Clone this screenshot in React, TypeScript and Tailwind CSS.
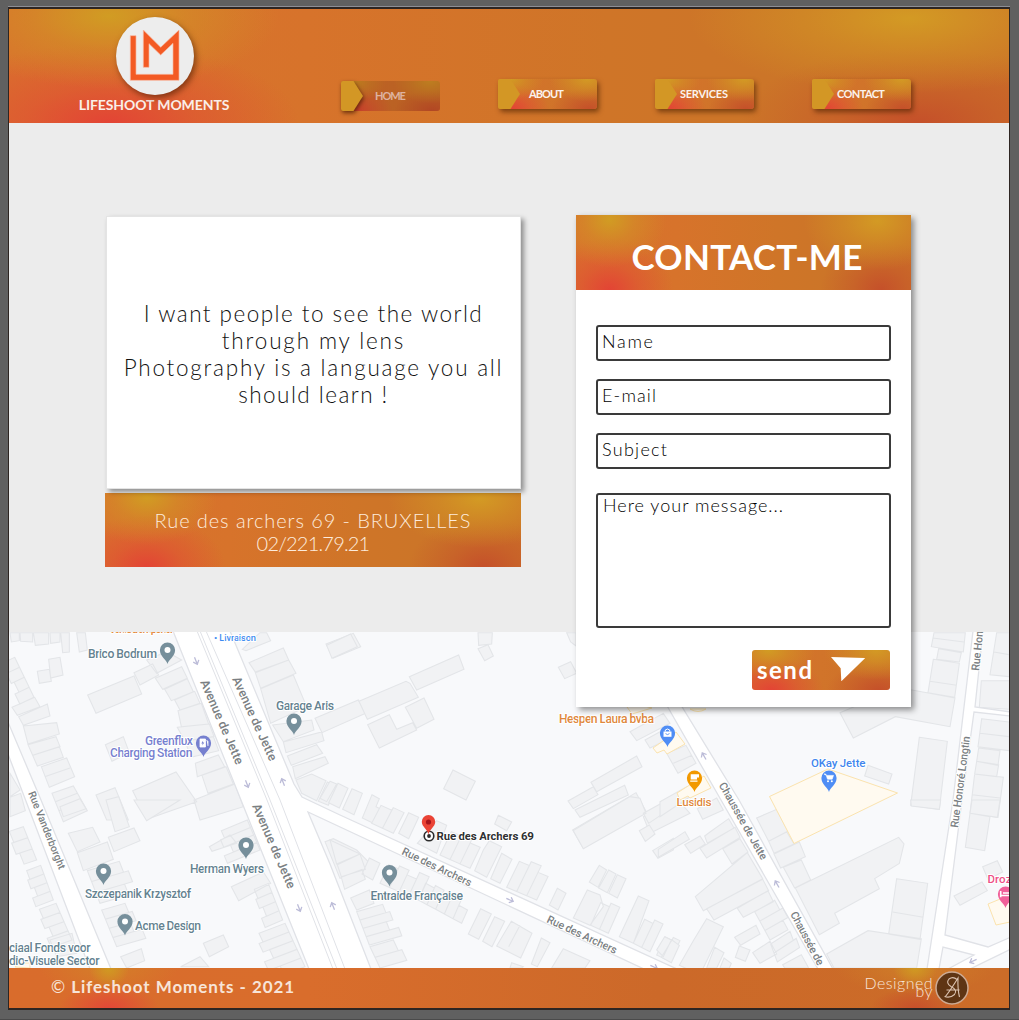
import type { ReactNode } from "react";

const EMBER =
  "bg-[radial-gradient(ellipse_17%_64%_at_10%_6%,#d19c23_0%,rgba(209,150,37,0.5)_45%,rgba(209,140,35,0)_100%),radial-gradient(ellipse_22%_66%_at_90%_8%,#d39a24_0%,rgba(211,150,36,0.55)_45%,rgba(211,140,36,0)_100%),radial-gradient(ellipse_19%_70%_at_10%_100%,#e34435_0%,rgba(225,76,52,0.55)_45%,rgba(222,90,50,0)_100%),radial-gradient(ellipse_18%_66%_at_91%_100%,#c5502a_0%,rgba(197,82,42,0.5)_45%,rgba(200,95,42,0)_100%),linear-gradient(90deg,#d9712d_0%,#d7732b_30%,#cf7528_60%,#cb7528_80%,#cb7028_100%)]";

const BUTTON_FILL =
  "bg-[radial-gradient(ellipse_34%_70%_at_12%_0%,#d19c23_0%,rgba(209,150,35,0.5)_50%,rgba(209,140,35,0)_100%),radial-gradient(ellipse_38%_75%_at_90%_0%,#d39a24_0%,rgba(211,150,36,0.5)_50%,rgba(211,140,36,0)_100%),radial-gradient(ellipse_38%_80%_at_14%_100%,#e34435_0%,rgba(225,76,52,0.5)_50%,rgba(222,90,50,0)_100%),radial-gradient(ellipse_38%_70%_at_92%_100%,#c5502a_0%,rgba(197,82,42,0.5)_50%,rgba(200,95,42,0)_100%),linear-gradient(90deg,#d76e2c_0%,#d1742a_50%,#cc7028_100%)]";

const FOOTER_FILL =
  "bg-[radial-gradient(ellipse_20px_20px_at_100px_0px,#d09a22_0%,rgba(208,154,34,0)_100%),radial-gradient(ellipse_70px_26px_at_100px_0px,rgba(211,130,40,0.8)_0%,rgba(211,130,40,0)_100%),radial-gradient(ellipse_50px_24px_at_100px_40px,#e34837_0%,rgba(227,72,55,0)_100%),radial-gradient(ellipse_22px_18px_at_906px_0px,#d09a22_0%,rgba(208,154,34,0)_100%),radial-gradient(ellipse_80px_26px_at_906px_0px,rgba(207,130,40,0.8)_0%,rgba(207,130,40,0)_100%),radial-gradient(ellipse_45px_20px_at_906px_40px,#c9502b_0%,rgba(201,80,43,0)_100%),linear-gradient(90deg,#d96c2c_0%,#d96d2c_30%,#cc6929_65%,#cb6c28_100%)]";

function Logo() {
  return (
    <svg viewBox="348 51 234 234" className="size-[78px] overflow-visible drop-shadow-[2px_3px_3px_rgba(70,25,0,0.6)]">
      <circle cx="465" cy="168" r="117" fill="#ededed" />
      <path
        d="M391 107H408V223H519V130L482 165L447 131V202H430V90L482 142L537 90V241H391Z"
        fill="#f35a24"
        stroke="#f9b79f"
        strokeWidth="2"
      />
    </svg>
  );
}

function NavButton({ label, className, active = false }: { label: string; className: string; active?: boolean }) {
  return (
    <a
      href="#"
      className={
        active
          ? "relative mt-[2px] block h-[30px] w-[99px]"
          : "relative block h-[30px] w-[99px] rounded-[3px] shadow-[2px_3px_5px_rgba(70,30,0,0.6)]"
      }
    >
      <span className={`absolute inset-0 rounded-[3px] ${BUTTON_FILL}`} />
      {active && <span className="absolute inset-0 rounded-[3px] bg-[#7a2a14]/25" />}
      <svg
        viewBox="0 0 22 30"
        className={
          active
            ? "absolute left-0 top-0 h-[30px] w-[22px] overflow-visible drop-shadow-[1px_2px_2px_rgba(60,20,0,0.7)]"
            : "absolute left-0 top-0 h-[30px] w-[22px]"
        }
      >
        <path d="M2 0H12.5L22 15L12.5 30H2Q0 30 0 28V2Q0 0 2 0Z" fill="#d39725" />
      </svg>
      <span className={`absolute top-[7px] whitespace-nowrap text-[11px] leading-[16px] font-bold ${className}`}>{label}</span>
    </a>
  );
}

/* Terrace of n houses along a street front; (dx, dy) points to the back yards. */
function row(x1: number, y1: number, x2: number, y2: number, n: number, dx: number, dy: number) {
  const depth = [1, 1.15, 0.9, 1.25, 0.8, 1.05];
  let d = "";
  for (let i = 0; i < n; i++) {
    const k = depth[i % depth.length];
    const ax = x1 + ((x2 - x1) * i) / n;
    const ay = y1 + ((y2 - y1) * i) / n;
    const bx = x1 + ((x2 - x1) * (i + 1)) / n;
    const by = y1 + ((y2 - y1) * (i + 1)) / n;
    d += `M${ax} ${ay}L${bx} ${by}l${dx * k} ${dy * k}L${ax + dx * k} ${ay + dy * k}Z`;
  }
  return d;
}

const BLOCKS: { x: number; y: number; d: string[] }[] = [
  {
    x: 0,
    y: 620,
    d: [
      "M30 38H58V62L34 66Z", "M60 38H98V66L62 64Z", "M100 38H146V72L106 76Z", "M150 38H180V66L152 70Z",
      "M182 38H208V96L188 98Z", "M230 38H256L262 90L238 96Z",
      "M146 118L180 112L189 165L152 174Z", "M112 154L148 148L154 184L118 190Z",
      "M263 225L402 168L425 222L288 280Z", "M402 158L458 132L476 165L420 195Z",
      "M316 374L370 350L388 398L336 424Z", "M398 512L528 456L590 545L440 598Z", "M288 525L345 503L385 600H320Z",
      row(44, 112, 102, 232, 4, -34, 16),
      "M36 262L104 232L120 260L52 286Z",
      "M56 290L142 252L150 288L70 316Z", "M70 318L170 308L178 342L84 372Z", "M84 374L168 350L180 380L98 406Z",
      "M98 406L178 380L190 412L112 438Z", "M124 440L200 414L224 470L148 502Z", "M134 470L210 444", "M156 520L220 498L262 572L190 605Z",
      "M166 545L232 520M176 572L246 546",
      "M30 460L60 510L30 530Z", "M30 532L62 520L76 572L30 590Z",
      "M440 120L500 95L545 120L470 160Z", "M466 175L545 140L562 175L488 208Z", "M494 208L562 176L580 215L514 242Z",
      "M524 240L584 214L600 250L540 270Z", "M534 272L604 250L626 312L544 320Z", "M532 322L628 312L642 350L554 362Z",
      "M556 364L640 350L656 392L572 412Z", "M586 430L655 405L674 440L592 470Z", "M606 466L678 440L700 492L624 520Z",
      "M582 540L705 492L730 560L600 600Z",
      "M727 88L780 38L800 38L812 62L738 92Z", "M747 128L850 84L866 120L766 156Z", "M766 158L866 120L888 160L782 205Z",
      "M782 206L880 165L920 260L812 310Z", "M818 315L935 300L942 330L850 365Z", "M850 366L965 336L972 362L858 398Z",
      "M862 408L950 374L968 400L874 436Z", "M878 440L975 410L985 430L886 476Z", "M888 480L935 462L978 482L950 542L905 520Z",
      "M982 486L1010 498L985 556L955 544Z",
      "M945 295L1075 240L1097 280L966 338Z", "M978 72L1060 40L1082 80L1000 114Z",
    ],
  },
  {
    x: 0,
    y: 800,
    d: [
      "M180 20L240 -4L258 26L190 50Z", "M205 100L278 82L300 126L232 155Z", "M325 112L402 84L420 122L342 155Z",
      "M232 158L322 126L340 178L250 212Z", "M402 0H540L440 62Z", "M318 0L356 -10L388 80L345 95Z",
      row(262, 212, 300, 310, 3, 96, -28), row(305, 330, 350, 440, 4, 70, -20), "M362 470L424 446L434 482L380 504Z",
      row(70, 80, 110, 180, 3, -42, 14), row(122, 196, 160, 300, 4, -42, 16), row(168, 310, 216, 420, 4, -50, 18), "M150 420L216 400L230 460L170 470Z",
      "M628 140L690 105L710 130L636 154Z", "M610 430L670 405L686 440L628 470Z", "M542 500L600 470L626 500Z",
      "M694 260L790 216L812 250L716 302Z", row(742, 60, 780, 150, 4, -78, 32), row(805, 250, 848, 360, 4, -42, 18), row(855, 370, 915, 500, 5, -78, 30),
      "M975 125L1000 116L1070 150L1120 200L1020 235Z",
    ],
  },
  {
    x: 330,
    y: 620,
    d: [
      "M-10 76L62 42L82 80L6 115Z", "M444 38H487L485 72L446 76Z", "M444 86L474 74L490 108L464 122Z",
      "M238 170L386 105L402 148L260 210Z", "M87 244L228 184L240 190L265 232L112 298Z",
      "M113 314L178 284L200 328L248 308L260 330L148 384Z", "M226 262L282 234L312 298L260 325Z",
      "M369 450L436 484L408 540L341 506Z", "M710 38H738V78L722 66Z", "M685 142L722 125L740 160L704 176Z",
      "M783 487L920 408L936 440L800 515Z", "M714 543L790 500L804 524L730 566Z", "M735 570L884 496L895 525L750 592Z",
      "M728 630L918 518L948 574L760 685Z", "M940 590L1040 535L1080 580L960 640Z",
      "M900 335L1000 280L1020 310L920 362Z", "M945 360L1000 330L1020 355L960 384Z",
      "M0 484L20 492L-10 545L-30 535Z", "M24 490L54 505L28 564L-4 548Z", "M66 506L97 520L72 584L38 568Z",
      "M126 524L148 536L138 560L150 566L130 610L97 594Z",
    ],
  },
  {
    x: 330,
    y: 800,
    d: [
      row(125, 70, 190, 100, 2, 28, -54), "M236 38L266 52L236 116L206 100Z", "M320 62L350 76L320 160L262 130Z",
      row(330, 165, 420, 205, 3, 34, -70), "M478 122L515 140L470 232L434 212L460 150Z", "M515 160L546 178L510 250L482 236Z",
      row(530, 262, 620, 300, 3, 38, -78), "M505 46L545 66L530 92L494 72Z", "M682 265L708 280L684 330L658 315Z",
      "M808 196L830 210L804 262L778 246Z", "M836 210L858 222L832 278L806 264Z", "M862 224L888 236L862 294L836 280Z",
      "M772 270L810 285L820 320L780 376L730 354Z", row(782, 376, 835, 400, 2, 30, -68),
      "M925 288L957 302L910 430L868 410Z", row(910, 430, 960, 455, 2, 34, -72), row(980, 465, 1020, 484, 2, 26, -54),
      "M730 92L900 -10L930 -5L948 40L760 146Z", "M928 92L958 75L975 102L946 124Z", "M968 152L1030 115V150L984 175Z", "M940 40L1030 -10V20L956 70Z",
      "M0 120L90 162L20 192Z", "M22 194L90 162L106 208L34 230Z", "M34 232L96 208L106 238L44 268Z", "M118 174L150 190L128 240L96 222Z",
      row(150, 250, 265, 300, 4, 26, -56), row(265, 300, 395, 370, 5, 22, -50),
      "M62 294L118 270L132 310L80 330Z", row(80, 335, 118, 435, 4, 78, -22), row(120, 440, 150, 504, 2, 70, -20),
      "M452 326L484 342L446 418L415 402Z", "M494 350L524 364L486 440L458 424Z", "M544 364L606 400L572 474L500 438Z", "M536 440L570 376",
      "M634 414L660 428L622 500L604 492Z", "M700 446L780 482L765 504H665Z", "M545 488L580 500L575 504H540Z",
    ],
  },
  {
    x: 660,
    y: 620,
    d: [
      "M822 38H916L910 96L814 80Z", "M818 54L912 66", "M836 86L904 98L898 126L830 118Z", "M820 118L898 130L884 232L804 218Z", "M810 184L890 196",
      "M540 278L700 210H756L885 234L870 320L706 290L580 354Z", "M778 352L862 364L838 568L752 556Z", "M624 436L696 462L686 492L614 468Z",
      "M964 182H1048V268L958 262Z", "M1010 38H1048V170L990 164Z", "M1002 96L1048 104", "M965 296L1048 306V392L954 380Z", "M960 340L1048 350",
      "M956 384L1020 392L1014 436L950 424Z", "M950 424L1016 434L1010 470L944 462Z", "M944 462L1030 472L1014 592L930 580Z", "M936 524L1020 534",
      "M20 400L78 376L108 430L54 460Z", "M40 430L96 406", "M0 545L80 500L90 530L0 590Z", "M112 566L170 534L190 570L128 598Z", "M290 595L350 570V600Z",
    ],
  },
  {
    x: 660,
    y: 800,
    d: [
      "M-5 148L75 95L88 118L-5 172Z", "M74 134L120 108L136 132L92 160Z", "M120 145L225 82L240 112L140 174Z", "M134 108L150 96L206 56L222 84L142 130Z",
      "M188 146L240 116L264 156L216 192Z", "M106 290L262 158L308 236L130 332Z", "M140 326L308 238L326 272L162 360Z",
      "M232 325L324 272L340 305L250 352Z", row(284, 335, 330, 420, 3, 60, -34), row(332, 432, 352, 486, 2, 58, -38), "M368 494L424 464L446 504H374Z",
      "M224 412L288 376L300 402L242 436Z", "M238 438L270 450L256 484L226 472Z", "M278 458L330 424L350 462L300 490Z",
      "M140 356L190 380L120 524L58 496L100 422Z", "M164 442L192 458L170 504H140Z", "M192 474L214 490L208 504H180Z",
      "M14 410L34 420L10 470L-10 450Z", "M36 420L58 436L34 488L4 472Z",
      "M290 54L350 28L384 94L326 124Z", "M326 124L380 95L402 132L342 160Z", "M342 162L418 126L436 170L362 204Z", "M370 202L424 180L452 240L404 264Z",
      "M406 264L716 112L732 132L718 190L644 236L658 266L524 340L538 370L478 404Z",
      "M710 236L803 250L780 418L686 402Z", "M698 336L790 352", "M500 462L624 392L784 416L770 504H522Z",
      "M752 0H842L838 28L754 18Z", "M936 0H1020L1012 52L930 40Z", "M930 40L990 50L974 152L916 142Z", "M968 200L1012 182L1028 216L984 238Z",
      "M882 288L966 246L982 272L900 316Z",
    ],
  },
];

function Pin({ x, y, fill, children }: { x: number; y: number; fill: string; children?: ReactNode }) {
  return (
    <g transform={`translate(${x} ${y})`}>
      <path d="M0 14C-1.2 9.5 -7.6 6.4 -7.6 0A7.6 7.6 0 1 1 7.6 0C7.6 6.4 1.2 9.5 0 14Z" fill={fill} />
      {children ?? <circle r="3" fill="#fff" />}
    </g>
  );
}

function Label({ x, y, w, children, fill = "#648290", size = 12.2, weight = 500, turn = 0 }: {
  x: number; y: number; w: number; children: string; fill?: string; size?: number; weight?: number; turn?: number;
}) {
  return (
    <text
      transform={`translate(${x} ${y}) rotate(${turn})`}
      textLength={w}
      fontSize={size}
      fontWeight={weight}
      fill={fill}
      stroke="#fff"
      strokeWidth="2"
      strokeLinejoin="round"
      className="[paint-order:stroke]"
    >
      {children}
    </text>
  );
}

function Arrow({ x, y, turn }: { x: number; y: number; turn: number }) {
  return (
    <path
      transform={`translate(${x} ${y}) rotate(${turn})`}
      d="M-4 0H3M0 -3L3.5 0L0 3"
      fill="none"
      stroke="#bcbcd8"
      strokeWidth="1.3"
    />
  );
}

const STREET = "#7b7f83";

function CityMap() {
  return (
    <svg viewBox="9 632 1000 336" className="block h-[336px] w-full font-['Roboto',sans-serif]" aria-label="Map">
      <rect x="9" y="632" width="1000" height="336" fill="#f8f9fb" />
      <g fill="#f1f2f4" stroke="#e3e5e8" strokeWidth="3.2">
        {BLOCKS.map((b, i) => (
          <path key={i} transform={`translate(${b.x} ${b.y}) scale(0.33333)`} d={b.d.join("")} />
        ))}
      </g>
      <g fill="#fffaf0" stroke="#fbe3ae" strokeWidth="1">
        <path d="M769.5 796.5L828 769L897.5 793L794 843.5Z" />
        <path d="M653 748L676 732L685 744L667 754L664 750L657 753Z" />
        <path d="M677 793L704 776L711 788L690 798L688 796L680 800Z" />
        <path d="M622 700L652 708L632 714Z" />
        <path d="M690 709Q698 714 706 709Z" />
        <path d="M988 904L1010 895V922L996 925Z" />
        <path d="M15 967L20 963H30V968Z" />
      </g>

      <g fill="#fff" stroke="#e0e2e7" strokeWidth="1.3">
        <path d="M8 754L90 969H111L41 800L8 722Z" />
        <path d="M173 631L249 820L309 969H371L330 864L308 812L644 969H677L340 815L302 797L294 784L230 631Z" />
        <path d="M662 697L721 800L818 969H833L739 800L676 697Z" />
        <path d="M973 631L953 800L927 969H939L943 947L974 955L948 969H970L1011 949V937L988 947L945 935L962 800L974 712L1011 716V712L975 707L983 631Z" />
      </g>
      <g fill="none" stroke="#e0e2e7" strokeWidth="1">
        <path d="M197 631L267 800L333 969M200 631L270 800L337 969M206 631L280 800L345 969" />
      </g>

      <Arrow x={196} y={661} turn={68} />
      <Arrow x={247} y={784} turn={68} />
      <Arrow x={283} y={782} turn={-112} />
      <Arrow x={299} y={908} turn={68} />
      <Arrow x={333} y={906} turn={-112} />
      <Arrow x={510} y={900} turn={24} />
      <Arrow x={654} y={967} turn={24} />
      <Arrow x={704} y={756} turn={-120} />
      <Arrow x={777} y={884} turn={-120} />
      <Arrow x={973} y={961} turn={155} />

      <Label x={200} y={682} w={91} turn={66.5} fill={STREET} size={12.5}>Avenue de Jette</Label>
      <Label x={232} y={679} w={91} turn={65.5} fill={STREET} size={12.5}>Avenue de Jette</Label>
      <Label x={252} y={806} w={91} turn={66.5} fill={STREET} size={12.5}>Avenue de Jette</Label>
      <Label x={28} y={793} w={83} turn={68} fill={STREET} size={10.5}>Rue Vanderborght</Label>
      <Label x={401} y={854} w={76} turn={25.5} fill={STREET} size={11}>Rue des Archers</Label>
      <Label x={546} y={922} w={76} turn={25} fill={STREET} size={11}>Rue des Archers</Label>
      <Label x={718.5} y={785} w={87} turn={60.5} fill={STREET} size={11}>Chaussée de Jette</Label>
      <Label x={790} y={914} w={59} turn={62} fill={STREET} size={11}>Chaussée de</Label>
      <Label x={958} y={828} w={92} turn={-82.5} fill={STREET} size={11}>Rue Honoré Longtin</Label>
      <Label x={979} y={671} w={40} turn={-84} fill={STREET} size={11}>Rue Hon</Label>

      <Label x={109} y={633} w={65} fill="#e58a3a" size={11}>Vente à emporter</Label>
      <Label x={88} y={658} w={69}>Brico Bodrum</Label>
      <Pin x={167.5} y={650} fill="#768f9b" />
      <Label x={214} y={640.5} w={42} fill="#3d8bf2" size={9.3}>• Livraison</Label>
      <Label x={276} y={710} w={58}>Garage Aris</Label>
      <Pin x={294} y={721} fill="#768f9b" />
      <Label x={145} y={744.5} w={48} fill="#7680cf">Greenflux</Label>
      <Label x={110} y={757} w={82.5} fill="#7680cf">Charging Station</Label>
      <Pin x={203.5} y={743} fill="#7680cf">
        <path d="M-3.5 -4H2V4H-3.5ZM3 -3L4.5 -1.5V3" fill="#fff" stroke="#fff" strokeWidth="0.8" />
        <path d="M-0.3 -2.5L-2.2 0.5H-0.8L-1.2 2.5L0.8 -0.5H-0.6Z" fill="#7680cf" />
      </Pin>
      <Label x={190} y={872.5} w={74}>Herman Wyers</Label>
      <Pin x={246} y={845} fill="#768f9b" />
      <Label x={85} y={898} w={106}>Szczepanik Krzysztof</Label>
      <Pin x={103.5} y={871} fill="#768f9b" />
      <Label x={135} y={929.5} w={66}>Acme Design</Label>
      <Pin x={125} y={921.5} fill="#768f9b" />
      <Label x={9} y={951.5} w={81.5}>ciaal Fonds voor</Label>
      <Label x={9} y={964.5} w={90.5}>dio-Visuele Sector</Label>
      <Label x={370.5} y={899.5} w={92.5}>Entraide Française</Label>
      <Pin x={389.5} y={872.5} fill="#768f9b" />

      <circle cx="429" cy="836" r="4.8" fill="#fff" stroke="#2b2b2b" strokeWidth="1.6" />
      <circle cx="429" cy="836" r="1.9" fill="#2b2b2b" />
      <path d="M428.5 834.500C427.5 829 421.8 827 421.8 821.8A6.7 6.7 0 1 1 435.2 821.8C435.2 827 429.5 829 428.5 834.5Z" fill="#ea4335" />
      <circle cx="428.5" cy="822" r="2.6" fill="#a6141a" />
      <Label x={436.5} y={840} w={97.5} fill="#2f3133" size={11.6} weight={700}>Rue des Archers 69</Label>

      <Label x={559} y={722.5} w={95} fill="#e0883c">Hespen Laura bvba</Label>
      <Pin x={667.5} y={733} fill="#4f8df5">
        <path d="M-4 -1.5H4V3.8H-4Z" fill="#fff" />
        <path d="M-2.2 -1.5V-3Q0 -5 2.2 -3V-1.5" fill="none" stroke="#fff" strokeWidth="1" />
        <path d="M-2 0.6Q0 2.6 2 0.6" fill="none" stroke="#4f8df5" strokeWidth="0.9" />
      </Pin>
      <Pin x={694.5} y={778} fill="#f29900">
        <path d="M-3.8 -3.8H4.5V-0.5H2.5V1.5H-3.8ZM-4.3 2.6H3V3.8H-4.3Z" fill="#fff" />
      </Pin>
      <Label x={676.5} y={805.5} w={35} fill="#e0883c" size={11.8}>Lusidis</Label>
      <Label x={811} y={767} w={54.5} fill="#3f86ee" size={11.6}>OKay Jette</Label>
      <Pin x={829} y={778} fill="#4f8df5">
        <path d="M-5 -4H-3.2L-1.5 1.2H3.2L4.5 -2.6H-2.5Z" fill="#fff" stroke="#fff" strokeWidth="0.6" />
        <circle cx="-1" cy="3.3" r="1" fill="#fff" />
        <circle cx="2.8" cy="3.3" r="1" fill="#fff" />
      </Pin>
      <Label x={987.5} y={883} w={24} fill="#ee4f86" size={11.6}>Droz</Label>
      <Pin x={1005.5} y={894} fill="#f0609a">
        <path d="M-4.8 -3V3.2M-4.8 1.5H5M-2.5 -1H4" fill="none" stroke="#fff" strokeWidth="1.6" />
      </Pin>
    </svg>
  );
}

function Field({ label, className }: { label: string; className: string }) {
  return (
    <div className="h-[36px] rounded-[3px] border-2 border-[#3a3a3a] bg-white px-[4px] text-[18px] leading-[28px] font-light text-black">
      <span className={className}>{label}</span>
    </div>
  );
}

export default function App() {
  return (
    <div className="h-[1020px] w-[1019px] overflow-hidden border-b border-[#4a4a4a] bg-[#606060] pt-[6px] pl-[8px] font-['Lato',sans-serif]">
      <div className="w-[1002px] border-t border-[#8d8f96]">
        <div className="flex flex-col border-x border-y-2 border-[#2d2522]">
          <header className={`flex h-[114px] shrink-0 ${EMBER}`}>
            <div className="flex w-[332px] flex-col pt-[8px]">
              <div className="flex w-[292px] flex-col items-center">
                <Logo />
                <p className="mt-[1px] -ml-[2px] text-[14px] leading-[17px] font-bold tracking-[-0.1px] whitespace-nowrap text-[#faeee8]">
                  LIFESHOOT MOMENTS
                </p>
              </div>
            </div>
            <nav className="flex items-start gap-[58px] pt-[70px]">
              <NavButton label="HOME" className="left-[34px] tracking-[-1.1px] text-[#deb3a0]" active />
              <NavButton label="ABOUT" className="left-[31px] tracking-[-0.9px] text-[#fbf3ee]" />
              <NavButton label="SERVICES" className="left-[25px] tracking-[-0.25px] text-[#fbf3ee]" />
              <NavButton label="CONTACT" className="left-[25px] tracking-[-0.6px] text-[#fbf3ee]" />
            </nav>
          </header>

          <main className="relative z-10 flex h-[509px] shrink-0 justify-between bg-[#ececec] pt-[92px] pr-[98px] pl-[96px]">
            <section className="flex w-[416px] flex-col">
              <div className="relative mt-[1px] ml-[1px] flex h-[273px] flex-col items-center justify-center border border-[#e4e4e4] bg-white pt-[2px] text-[22.5px] leading-[27px] font-light text-[#111] shadow-[3px_3px_5px_rgba(0,0,0,0.4)]">
                <p className="tracking-[1.47px]">I want people to see the world</p>
                <p className="tracking-[1.85px]">through my lens</p>
                <p className="tracking-[1.76px]">Photography is a language you all</p>
                <p className="tracking-[1.46px]">should learn !</p>
              </div>
              <address className={`mt-[4px] flex h-[74px] flex-col items-center justify-center pt-[3px] text-[20px] leading-[23px] font-light text-[#fdebdc] not-italic ${EMBER}`}>
                <span className="tracking-[0.92px]">Rue des archers 69 - BRUXELLES</span>
                <span className="tracking-[-0.8px]">02/221.79.21</span>
              </address>
            </section>

            <section className="flex h-[492px] w-[335px] flex-col bg-white shadow-[3px_3px_6px_rgba(0,0,0,0.42)]">
              <h1 className={`flex h-[75px] items-center justify-center pt-[8px] pl-[7px] text-[35px] leading-none font-bold tracking-[0.3px] text-white ${EMBER}`}>
                CONTACT-ME
              </h1>
              <form className="flex flex-col gap-[18px] px-[20px] pt-[35px]">
                <Field label="Name" className="tracking-[1.7px]" />
                <Field label="E-mail" className="tracking-[1.14px]" />
                <Field label="Subject" className="tracking-[1.29px]" />
                <div className="mt-[6px] h-[135px] rounded-[3px] border-2 border-[#3a3a3a] px-[5px] text-[18px] leading-[20px] font-light tracking-[1px] text-black">
                  Here your message...
                </div>
                <button
                  type="button"
                  className={`mt-[4px] mr-[1px] flex h-[40px] w-[138px] items-center self-end rounded-[3px] pl-[5px] text-white ${BUTTON_FILL}`}
                >
                  <span className="text-[24px] leading-none font-bold tracking-[1.5px]">send</span>
                  <svg viewBox="512 111 103 73" className="-mt-[2px] ml-[17px] h-[24.3px] w-[34.3px]">
                    <path d="M512 111L615 114L543 184L541 145Z" fill="#fff" />
                  </svg>
                </button>
              </form>
            </section>
          </main>

          <CityMap />

          <footer className={`flex h-[40px] shrink-0 items-center pr-[40px] pl-[42px] text-[#f7e4d8] ${FOOTER_FILL}`}>
            <p className="-mt-[3px] text-[17px] font-bold tracking-[0.95px] whitespace-nowrap">
              <span className="font-normal">©</span> Lifeshoot Moments - 2021
            </p>
            <div className="ml-auto flex items-center gap-[2px]">
              <p className="-mt-[3px] text-right text-[16px] leading-[8px] font-light tracking-[0.45px]">
                Designed
                <br />
                by
              </p>
              <svg viewBox="0 0 34 34" className="size-[34px]">
                <circle cx="17" cy="17" r="16" fill="#5f3514" stroke="#cdab94" strokeWidth="1.5" />
                <path
                  d="M22 8.5Q18 5 14 8Q10.5 12 16 15.5Q23 19 19.5 23.5Q15 27.5 9.5 25.5M10 26Q15 20 23 7Q22.5 18 24.5 26M11.500 19H24.5"
                  fill="none"
                  stroke="#dcc4b2"
                  strokeWidth="1.1"
                />
              </svg>
            </div>
          </footer>
        </div>
      </div>
    </div>
  );
}
